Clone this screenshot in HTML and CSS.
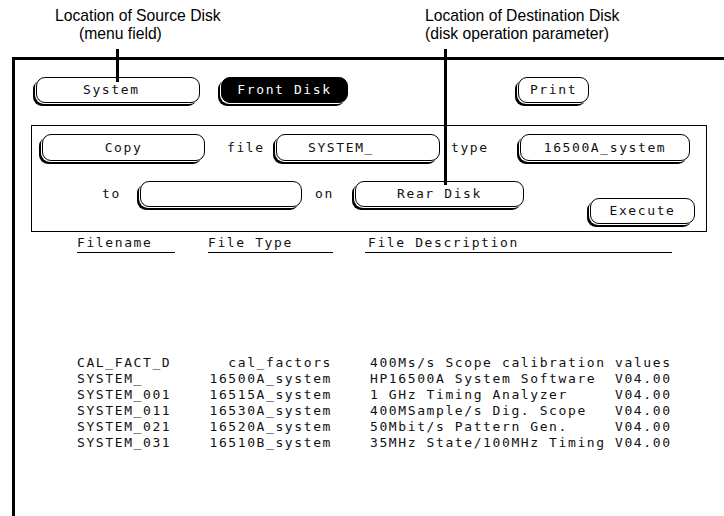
FILE: index.html
```html
<!DOCTYPE html>
<html lang="en">
<head>
  <meta charset="UTF-8" />
  <title>Disk Operation — Copy</title>
  <link rel="stylesheet" href="styles.css">
</head>
<body>

<!-- Подписи над экраном -->
<div class="notes">
  <div class="note note-source">
    <div>Location of Source Disk</div>
    <div class="note-indent">(menu field)</div>
  </div>
  <div class="note note-dest">
    <div>Location of Destination Disk</div>
    <div>(disk operation parameter)</div>
  </div>
</div>

<span class="pointer pointer-source"></span>
<span class="pointer pointer-dest"></span>

<div class="screen">
  <div class="menu-row">
    <div class="field field-system">System</div>
    <div class="field field-front selected">Front Disk</div>
    <div class="field field-print">Print</div>
  </div>

  <div class="panel">
    <div class="panel-row">
      <div class="field field-copy">Copy</div>
      <span class="label label-file">file</span>
      <div class="field field-name">SYSTEM_</div>
      <span class="label label-type">type</span>
      <div class="field field-ftype">16500A_system</div>
    </div>
    <div class="panel-row row-dest">
      <span class="label label-to">to</span>
      <div class="field field-to"></div>
      <span class="label label-on">on</span>
      <div class="field field-rear">Rear Disk</div>
      <div class="field field-exec">Execute</div>
    </div>
  </div>

  <div class="list-head">
    <div class="col-name">Filename</div>
    <div class="col-type">File Type</div>
    <div class="col-desc">File Description</div>
  </div>

  <div class="file-list">
    <div class="file-row">
      <span>CAL_FACT_D</span><span class="ftype">cal_factors</span><span class="desc wide">400Ms/s Scope calibration values</span>
    </div>
    <div class="file-row">
      <span>SYSTEM_</span><span class="ftype">16500A_system</span><span class="desc">HP16500A System Software</span><span>V04.00</span>
    </div>
    <div class="file-row">
      <span>SYSTEM_001</span><span class="ftype">16515A_system</span><span class="desc">1 GHz Timing Analyzer</span><span>V04.00</span>
    </div>
    <div class="file-row">
      <span>SYSTEM_011</span><span class="ftype">16530A_system</span><span class="desc">400MSample/s Dig. Scope</span><span>V04.00</span>
    </div>
    <div class="file-row">
      <span>SYSTEM_021</span><span class="ftype">16520A_system</span><span class="desc">50Mbit/s Pattern Gen.</span><span>V04.00</span>
    </div>
    <div class="file-row">
      <span>SYSTEM_031</span><span class="ftype">16510B_system</span><span class="desc">35MHz State/100MHz Timing</span><span>V04.00</span>
    </div>
  </div>
</div>

</body>
</html>
```

FILE: styles.css
```css
body {
  margin: 0;
  padding: 0;
  background: #fff;
  color: #000;
  position: relative;
  height: 516px;
  overflow: hidden;
}

/* Подписи */
.notes {
  height: 57px;
  display: flex;
  font-family: "Liberation Sans", Arial, sans-serif;
  font-size: 15.7px;
  line-height: 18px;
}

.note {
  padding-top: 7px;
}

.note-source {
  margin-left: 55px;
  width: 370px;
}

.note-indent {
  padding-left: 24px;
}

.pointer {
  position: absolute;
  width: 3px;
  background: #000;
  top: 49px;
  z-index: 5;
}

.pointer-source {
  left: 116px;
  height: 33px;
}

.pointer-dest {
  left: 444px;
  height: 136px;
}

/* Экран прибора */
.screen {
  margin-left: 12px;
  height: 459px;
  border-top: 3px solid #000;
  border-left: 3px solid #000;
  font-family: "DejaVu Sans Mono", monospace;
  font-size: 13px;
  letter-spacing: 1.6px;
  line-height: 16px;
  color: #111;
}

.field {
  box-sizing: border-box;
  height: 26px;
  border: 1px solid #000;
  border-radius: 9px;
  background: #fff;
  display: flex;
  align-items: center;
  justify-content: center;
  box-shadow: -1px 1px 0 #fff, -3px 3px 0 #000;
}

.field.selected {
  background: #000;
  color: #fff;
}

.menu-row {
  display: flex;
  align-items: flex-start;
  padding-top: 17px;
  padding-left: 21px;
}

.field-system {
  width: 164px;
  justify-content: flex-start;
  padding-left: 46px;
}

.field-front {
  width: 127px;
  margin-left: 21px;
}

.field-print {
  width: 71px;
  margin-left: 170px;
}

/* Панель операции */
.panel {
  box-sizing: border-box;
  width: 676px;
  height: 107px;
  margin-top: 22px;
  margin-left: 16px;
  border: 1px solid #000;
  padding-top: 8px;
}

.panel-row {
  display: flex;
  align-items: center;
}

.row-dest {
  align-items: flex-start;
  margin-top: 20px;
}

.row-dest .label {
  line-height: 26px;
}

.label {
  display: block;
}

.field-copy {
  width: 163px;
  height: 27px;
  margin-left: 10px;
}

.label-file {
  margin-left: 22px;
  width: 49px;
}

.field-name {
  width: 164px;
  height: 27px;
  justify-content: flex-start;
  padding-left: 31px;
}

.label-type {
  margin-left: 11px;
  width: 69px;
}

.field-ftype {
  width: 170px;
  height: 27px;
}

.label-to {
  margin-left: 70px;
  width: 38px;
}

.field-to {
  width: 162px;
}

.label-on {
  margin-left: 13px;
  width: 40px;
}

.field-rear {
  width: 169px;
}

.field-exec {
  width: 105px;
  margin-top: 17px;
  margin-left: auto;
  margin-right: 11px;
}

/* Список файлов */
.list-head {
  display: flex;
  margin-top: 3px;
  padding-left: 62px;
}

.list-head div {
  border-bottom: 1px solid #000;
  padding-bottom: 1px;
}

.col-name {
  width: 98px;
}

.col-type {
  width: 125px;
  margin-left: 33px;
}

.col-desc {
  width: 304px;
  margin-left: 32px;
  padding-left: 3px;
}

.file-list {
  margin-top: 102px;
  padding-left: 62px;
}

.file-row {
  display: grid;
  grid-template-columns: 132px 123px 283px auto;
  white-space: pre;
}

.ftype {
  text-align: right;
}

.desc {
  padding-left: 38px;
}

.desc.wide {
  grid-column: span 2;
}
```
